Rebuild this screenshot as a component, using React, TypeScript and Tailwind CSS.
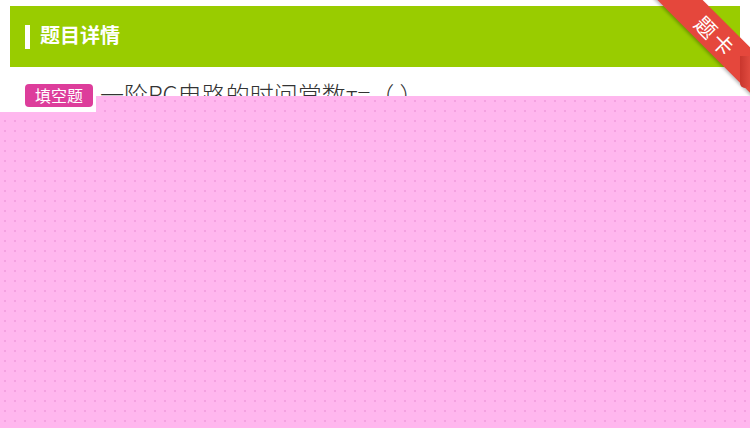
import React from 'react';

const cjk = { fontFamily: '"Noto Sans CJK SC", "Noto Sans", sans-serif' };

const Ribbon: React.FC = () => (
  <div className="absolute right-0 top-0 w-[100px] h-[100px] overflow-hidden pointer-events-none">
    {/* diagonal band */}
    <div className="absolute left-[-11px] top-[18px] w-[150px] h-[32px] rotate-45 bg-[#e5473c] flex items-center justify-center shadow-[0_2px_3px_rgba(0,0,0,0.25)]">
      <span className="text-white text-[21px] leading-none tracking-[3px] pl-[6px]" style={cjk}>
        题卡
      </span>
    </div>
    {/* fold tail on the right edge */}
    <div className="absolute right-0 top-[56px] w-[10px] h-[32px] rounded-b-[6px] bg-gradient-to-r from-[#c9362d] to-[#e04a3f]"></div>
  </div>
);

export default function App() {
  return (
    <div className="relative w-[750px] h-[428px] overflow-hidden bg-white" style={cjk}>
      {/* header */}
      <div className="mx-[10px] mt-[6px] h-[61px] bg-[#99cc00] flex items-center pl-[15px] gap-[10px]">
        <div className="w-[5px] h-[24px] bg-white"></div>
        <h1 className="text-white text-[20px] font-bold leading-none -mt-[3px]">题目详情</h1>
      </div>

      {/* question */}
      <div className="flex items-start pl-[25px] pt-[11px] gap-[7px]">
        <span className="mt-[6px] h-[23px] w-[68px] rounded-[4px] bg-[#dd3d9b] text-white text-[16px] leading-[23px] text-center">
          填空题
        </span>
        <p className="text-[#333333] text-[24px] leading-[32px] font-light">一阶RC电路的时间常数τ=（ ）</p>
      </div>

      <Ribbon />

      {/* pink overlay */}
      <div className="absolute left-0 right-0 top-[96px] bottom-0 bg-[#ffb7ee] bg-[radial-gradient(circle,#f4a2e1_1px,transparent_1.5px)] bg-[length:10px_10px] [clip-path:polygon(96px_0,100%_0,100%_100%,0_100%,0_16px,96px_16px)]"></div>
    </div>
  );
}
